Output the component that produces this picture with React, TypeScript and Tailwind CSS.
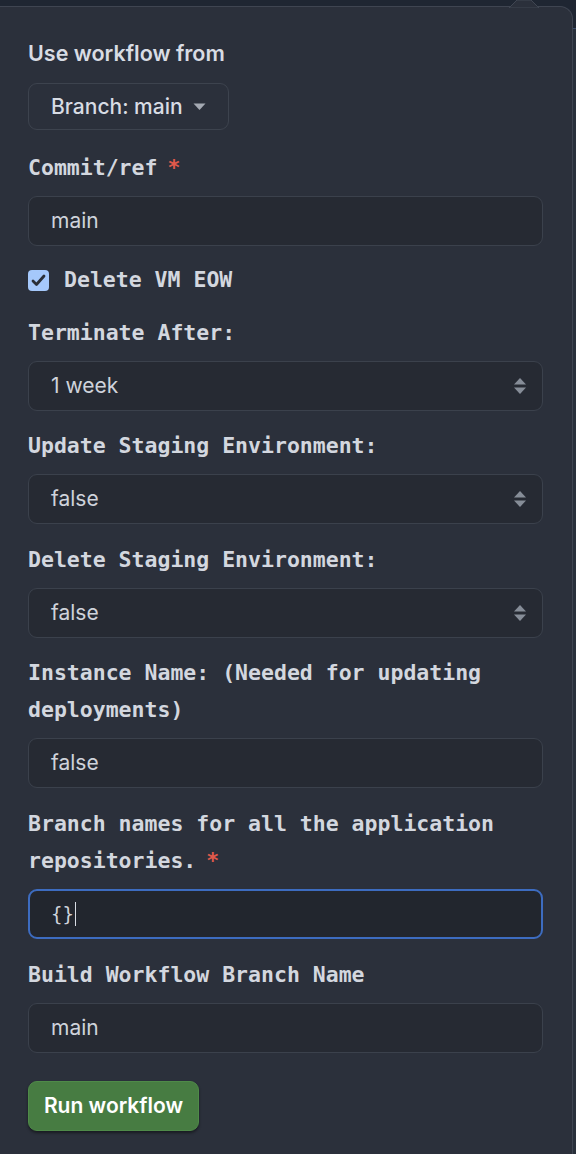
const mono = "font-['DejaVu_Sans_Mono','Liberation_Mono',monospace]";
const sans = "font-['Inter','Noto_Sans',sans-serif]";

function Label({ text, required }: { text: string; required?: boolean }) {
  return (
    <div className={`${mono} mb-[10px] text-[21.5px] font-bold leading-[37px] text-[#d3d7df]`}>
      {text}
      {required && <span className="ml-[10px] inline-block text-[#e0594b]">*</span>}
    </div>
  );
}

function TextInput({ value }: { value: string }) {
  return (
    <div className={`${sans} flex h-[50px] items-center rounded-[9px] border border-[#3b414c] bg-[#262a33] px-[22px] text-[21px] text-[#cfd3db]`}>
      {value}
    </div>
  );
}

function SelectBox({ value }: { value: string }) {
  return (
    <div className={`${sans} flex h-[50px] items-center justify-between rounded-[9px] border border-[#3b414c] bg-[#262a33] pl-[22px] pr-[15px] text-[21px] text-[#cfd3db]`}>
      <span>{value}</span>
      <svg width="14" height="20" viewBox="0 0 14 20" className="text-[#868d98]">
        <path d="M1 8.5 L7 2 L13 8.5 Z" fill="currentColor" />
        <path d="M1 11.5 L7 18 L13 11.5 Z" fill="currentColor" />
      </svg>
    </div>
  );
}

export default function App() {
  return (
    <div className="relative flex min-h-[1154px] bg-[#1f2632]">
      {/* caret pointing at the trigger */}
      <svg className="absolute left-[508px] top-0" width="32" height="8" viewBox="0 0 32 8">
        <path d="M1 8 L9 0 L23 0 L31 8 Z" fill="#2b303b" stroke="#404652" strokeWidth="1" />
      </svg>
      <div className="mt-[6px] flex-1 rounded-tr-[13px] border-r border-t border-[#3f4551] bg-[#2b303b] pl-[28px] pr-[29px] pt-[28px]">
        <div className={`${sans} mb-[11px] text-[21.5px] font-semibold leading-[37px] text-[#d8dce4]`}>
          Use workflow from
        </div>
        <button className={`${sans} flex h-[47px] w-[201px] items-center gap-[10px] rounded-[9px] border border-[#3d434e] bg-[#2b303b] px-[22px] text-[21px] font-medium text-[#d8dce4]`}>
          Branch: main
          <svg width="13" height="8" viewBox="0 0 13 8">
            <path d="M0.5 0.5 L12.5 0.5 L6.5 7 Z" fill="#a4a9b2" />
          </svg>
        </button>

        <div className="mt-[19px]">
          <Label text="Commit/ref" required />
          <TextInput value="main" />
        </div>

        <label className={`${mono} mt-[16px] flex h-[37px] items-center gap-[15px] text-[21.5px] font-bold text-[#d3d7df]`}>
          <span className="flex h-[21px] w-[21px] items-center justify-center rounded-[4px] bg-[#a5c8fb]">
            <svg width="15" height="13" viewBox="0 0 15 13">
              <path d="M2 7 L5.5 10.5 L13 2" fill="none" stroke="#2a2f38" strokeWidth="2.8" strokeLinecap="round" strokeLinejoin="round" />
            </svg>
          </span>
          Delete VM EOW
        </label>

        <div className="mt-[15px]">
          <Label text="Terminate After:" />
          <SelectBox value="1 week" />
        </div>

        <div className="mt-[16px]">
          <Label text="Update Staging Environment:" />
          <SelectBox value="false" />
        </div>

        <div className="mt-[17px]">
          <Label text="Delete Staging Environment:" />
          <SelectBox value="false" />
        </div>

        <div className="mt-[16px]">
          <Label text="Instance Name: (Needed for updating deployments)" />
          <TextInput value="false" />
        </div>

        <div className="mt-[17px]">
          <Label text="Branch names for all the application repositories." required />
          <div className="flex h-[50px] items-center rounded-[9px] border-2 border-[#3d6cc0] bg-[#22262e] px-[21px]">
            <span className={`${mono} text-[19px] text-[#cfd3db]`}>{"{}"}</span>
            <span className="ml-[1px] h-[24px] w-[1.5px] bg-[#d8dce4]" />
          </div>
        </div>

        <div className="mt-[17px]">
          <Label text="Build Workflow Branch Name" />
          <TextInput value="main" />
        </div>

        <button className={`${sans} mt-[28px] h-[50px] w-[171px] rounded-[9px] border border-[#4f8a49] bg-[#477c42] text-[21px] font-semibold text-white shadow-[0_2px_3px_rgba(0,0,0,0.45)]`}>
          Run workflow
        </button>
      </div>
      <div className="flex w-[3px] flex-col">
        <div className="h-[28px] bg-[#1f2632]" />
        <div className="h-[1px] bg-[#3b4d6b]" />
        <div className="flex-1 bg-[#29303b]" />
      </div>
    </div>
  );
}
